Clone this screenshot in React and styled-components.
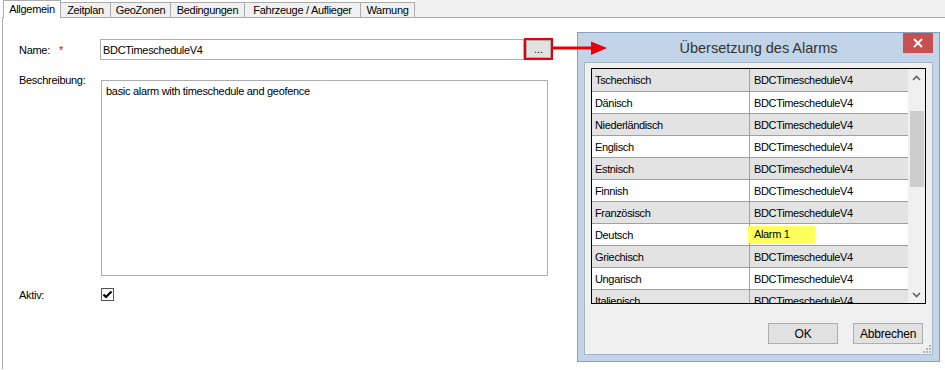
import React from 'react';
import styled, { createGlobalStyle } from 'styled-components';

const GlobalStyle = createGlobalStyle`
  html, body {
    margin: 0;
    padding: 0;
    background: #ffffff;
  }
  body {
    font-family: "Liberation Sans", Arial, sans-serif;
    color: #000;
  }
`;

const Page = styled.div`
  position: relative;
  width: 945px;
  height: 370px;
  overflow: hidden;
  background: #fff;
  font-size: 11px;
  letter-spacing: -0.3px;
`;

const TabStrip = styled.div`
  display: flex;
  align-items: flex-end;
  height: 17px;
  padding-left: 3px;
`;

const Tab = styled.div`
  position: relative;
  box-sizing: border-box;
  width: ${p => p.$w}px;
  height: ${p => (p.$active ? 18 : 15)}px;
  margin-left: -1px;
  margin-bottom: ${p => (p.$active ? -1 : 0)}px;
  display: flex;
  align-items: center;
  justify-content: center;
  padding-bottom: ${p => (p.$active ? 2 : 0)}px;
  background: ${p => (p.$active ? '#fff' : '#f0f0f0')};
  border: 1px solid #acacac;
  border-bottom: none;
  z-index: ${p => (p.$active ? 2 : 1)};
  &:first-child {
    margin-left: 0;
  }
`;

const StripFill = styled.div`
  flex: 1;
  height: 17px;
  background: #f0f0f0;
`;

const Panel = styled.div`
  height: 352px;
  margin-left: 2px;
  border-top: 1px solid #acacac;
  border-left: 1px solid #acacac;
  padding: 21px 0 0 16px;
  box-sizing: border-box;
`;

const FieldRow = styled.div`
  display: grid;
  grid-template-columns: 81px auto;
  align-items: ${p => p.$align || 'center'};
  margin-top: ${p => p.$gap || 0}px;
`;

const Label = styled.div`
  display: flex;
  gap: 9px;
  margin-top: ${p => p.$shift || 0}px;
`;

const Required = styled.span`
  color: #e8000b;
`;

const InputGroup = styled.div`
  display: flex;
  align-items: center;
`;

const TextInput = styled.div`
  box-sizing: border-box;
  width: 424px;
  height: 21px;
  border: 1px solid #abadb3;
  padding-left: 2px;
  display: flex;
  align-items: center;
`;

const EllipsisFrame = styled.div`
  box-sizing: border-box;
  width: 29px;
  height: 22px;
  margin-top: -1px;
  border: 2px solid #e8000b;
`;

const EllipsisButton = styled.div`
  box-sizing: border-box;
  height: 100%;
  background: #e1e1e1;
  border: 1px solid #adadad;
  display: flex;
  align-items: flex-end;
  justify-content: center;
  padding-bottom: 2px;
  letter-spacing: 0;
`;

const TextArea = styled.div`
  box-sizing: border-box;
  width: 447px;
  height: 196px;
  margin-left: 1px;
  border: 1px solid #abadb3;
  padding: 4px 4px;
`;

const CheckBox = styled.div`
  box-sizing: border-box;
  width: 13px;
  height: 13px;
  margin-left: 1px;
  border: 1px solid #555;
  background: #fff;
  display: flex;
  align-items: center;
  justify-content: center;
`;

const Arrow = styled.svg`
  position: absolute;
  left: 553px;
  top: 40px;
  z-index: 5;
`;

const Dialog = styled.div`
  position: absolute;
  left: 577px;
  top: 32px;
  width: 363px;
  height: 330px;
  box-sizing: border-box;
  background: #c2d4e7;
  border: 1px solid #8aa0ba;
  display: flex;
  flex-direction: column;
  font-size: 11px;
  letter-spacing: -0.35px;
  z-index: 3;
`;

const TitleBar = styled.div`
  position: relative;
  height: 29px;
  display: flex;
  align-items: center;
  justify-content: center;
  font-size: 14.5px;
  letter-spacing: 0;
  color: #333;
`;

const CloseButton = styled.div`
  position: absolute;
  top: 0;
  right: 6px;
  width: 30px;
  height: 20px;
  background: #c75050;
  display: flex;
  align-items: center;
  justify-content: center;
`;

const Client = styled.div`
  position: relative;
  flex: 1;
  margin: 0 6px 6px 6px;
  background: #f0f0f0;
  border: 1px solid #a6b5c5;
  padding: 5px 0 0 6px;
  display: flex;
  flex-direction: column;
`;

const Grid = styled.div`
  box-sizing: border-box;
  width: 335px;
  height: 236px;
  border: 1px solid #000;
  display: flex;
  overflow: hidden;
`;

const Rows = styled.div`
  flex: 1;
  overflow: hidden;
`;

const Row = styled.div`
  box-sizing: border-box;
  display: grid;
  grid-template-columns: 158px 1fr;
  height: 22px;
  border-bottom: 1px solid #a0a0a0;
  background: ${p => (p.$shaded ? '#e3e3e3' : '#fff')};
  &:first-child {
    height: 23px;
  }
`;

const Cell = styled.div`
  display: flex;
  align-items: center;
  padding-left: ${p => (p.$first ? 3 : 4)}px;
  border-right: ${p => (p.$first ? '1px solid #a0a0a0' : 'none')};
  white-space: nowrap;
`;

const Highlight = styled.span`
  display: inline-block;
  box-sizing: border-box;
  width: 67px;
  height: 17px;
  line-height: 17px;
  margin-left: -6px;
  padding-left: 6px;
  background: #ffff5c;
`;

const ScrollBar = styled.div`
  width: 17px;
  background: #f0f0f0;
  display: flex;
  flex-direction: column;
`;

const ScrollArrow = styled.div`
  height: 17px;
  display: flex;
  align-items: center;
  justify-content: center;
`;

const ScrollTrack = styled.div`
  flex: 1;
  padding: 25px 1px 0 2px;
`;

const Thumb = styled.div`
  height: 76px;
  background: #cdcdcd;
`;

const ButtonRow = styled.div`
  display: flex;
  justify-content: flex-end;
  gap: 15px;
  margin-top: 19px;
  padding-right: 9px;
`;

const Button = styled.div`
  box-sizing: border-box;
  width: 70px;
  height: 21px;
  background: #e1e1e1;
  border: 1px solid #adadad;
  display: flex;
  align-items: center;
  justify-content: center;
  font-size: 12px;
  letter-spacing: -0.2px;
`;

const Grip = styled.svg`
  position: absolute;
  right: 1px;
  bottom: 1px;
`;

const tabs = [
  { label: 'Allgemein', w: 58 },
  { label: 'Zeitplan', w: 51 },
  { label: 'GeoZonen', w: 61 },
  { label: 'Bedingungen', w: 75 },
  { label: 'Fahrzeuge / Auflieger', w: 117 },
  { label: 'Warnung', w: 55 },
];

const languages = [
  'Tschechisch',
  'Dänisch',
  'Niederländisch',
  'Englisch',
  'Estnisch',
  'Finnish',
  'Französisch',
  'Deutsch',
  'Griechisch',
  'Ungarisch',
  'Italienisch',
];

const Chevron = ({ up }) => (
  <svg width="9" height="6" viewBox="0 0 9 6">
    <polyline
      points={up ? '1,5 4.5,1.5 8,5' : '1,1 4.5,4.5 8,1'}
      fill="none"
      stroke="#606060"
      strokeWidth="1.6"
    />
  </svg>
);

export default function App() {
  return (
    <Page>
      <GlobalStyle />
      <TabStrip>
        {tabs.map((t, i) => (
          <Tab key={t.label} $w={t.w} $active={i === 0}>
            {t.label}
          </Tab>
        ))}
        <StripFill />
      </TabStrip>

      <Panel>
        <FieldRow>
          <Label>
            Name: <Required>*</Required>
          </Label>
          <InputGroup>
            <TextInput>BDCTimescheduleV4</TextInput>
            <EllipsisFrame>
              <EllipsisButton>...</EllipsisButton>
            </EllipsisFrame>
          </InputGroup>
        </FieldRow>

        <FieldRow $align="start" $gap={20}>
          <Label $shift={-6}>Beschreibung:</Label>
          <TextArea>basic alarm with timeschedule and geofence</TextArea>
        </FieldRow>

        <FieldRow $gap={12}>
          <Label>Aktiv:</Label>
          <CheckBox>
            <svg width="11" height="11" viewBox="0 0 11 11">
              <path d="M1.5 5.5 L4 8 L9.5 2.5" fill="none" stroke="#000" strokeWidth="2.2" />
            </svg>
          </CheckBox>
        </FieldRow>
      </Panel>

      <Dialog>
        <TitleBar>
          Übersetzung des Alarms
          <CloseButton>
            <svg width="10" height="10" viewBox="0 0 10 10">
              <path d="M1 1 L9 9 M9 1 L1 9" stroke="#fff" strokeWidth="1.8" />
            </svg>
          </CloseButton>
        </TitleBar>
        <Client>
          <Grid>
            <Rows>
              {languages.map((lang, i) => (
                <Row key={lang} $shaded={i % 2 === 0}>
                  <Cell $first>{lang}</Cell>
                  <Cell>
                    {lang === 'Deutsch' ? <Highlight>Alarm 1</Highlight> : 'BDCTimescheduleV4'}
                  </Cell>
                </Row>
              ))}
            </Rows>
            <ScrollBar>
              <ScrollArrow>
                <Chevron up />
              </ScrollArrow>
              <ScrollTrack>
                <Thumb />
              </ScrollTrack>
              <ScrollArrow>
                <Chevron />
              </ScrollArrow>
            </ScrollBar>
          </Grid>
          <ButtonRow>
            <Button>OK</Button>
            <Button>Abbrechen</Button>
          </ButtonRow>
          <Grip width="9" height="9" viewBox="0 0 9 9">
            <g fill="#b5b5b5">
              <rect x="7" y="1" width="2" height="2" />
              <rect x="4" y="4" width="2" height="2" />
              <rect x="7" y="4" width="2" height="2" />
              <rect x="1" y="7" width="2" height="2" />
              <rect x="4" y="7" width="2" height="2" />
              <rect x="7" y="7" width="2" height="2" />
            </g>
          </Grip>
        </Client>
      </Dialog>

      <Arrow width="56" height="18" viewBox="0 0 56 18">
        <line x1="0" y1="8" x2="40" y2="8" stroke="#e8000b" strokeWidth="3" />
        <polygon points="38,1.5 54,8 38,15" fill="#e8000b" />
      </Arrow>
    </Page>
  );
}
